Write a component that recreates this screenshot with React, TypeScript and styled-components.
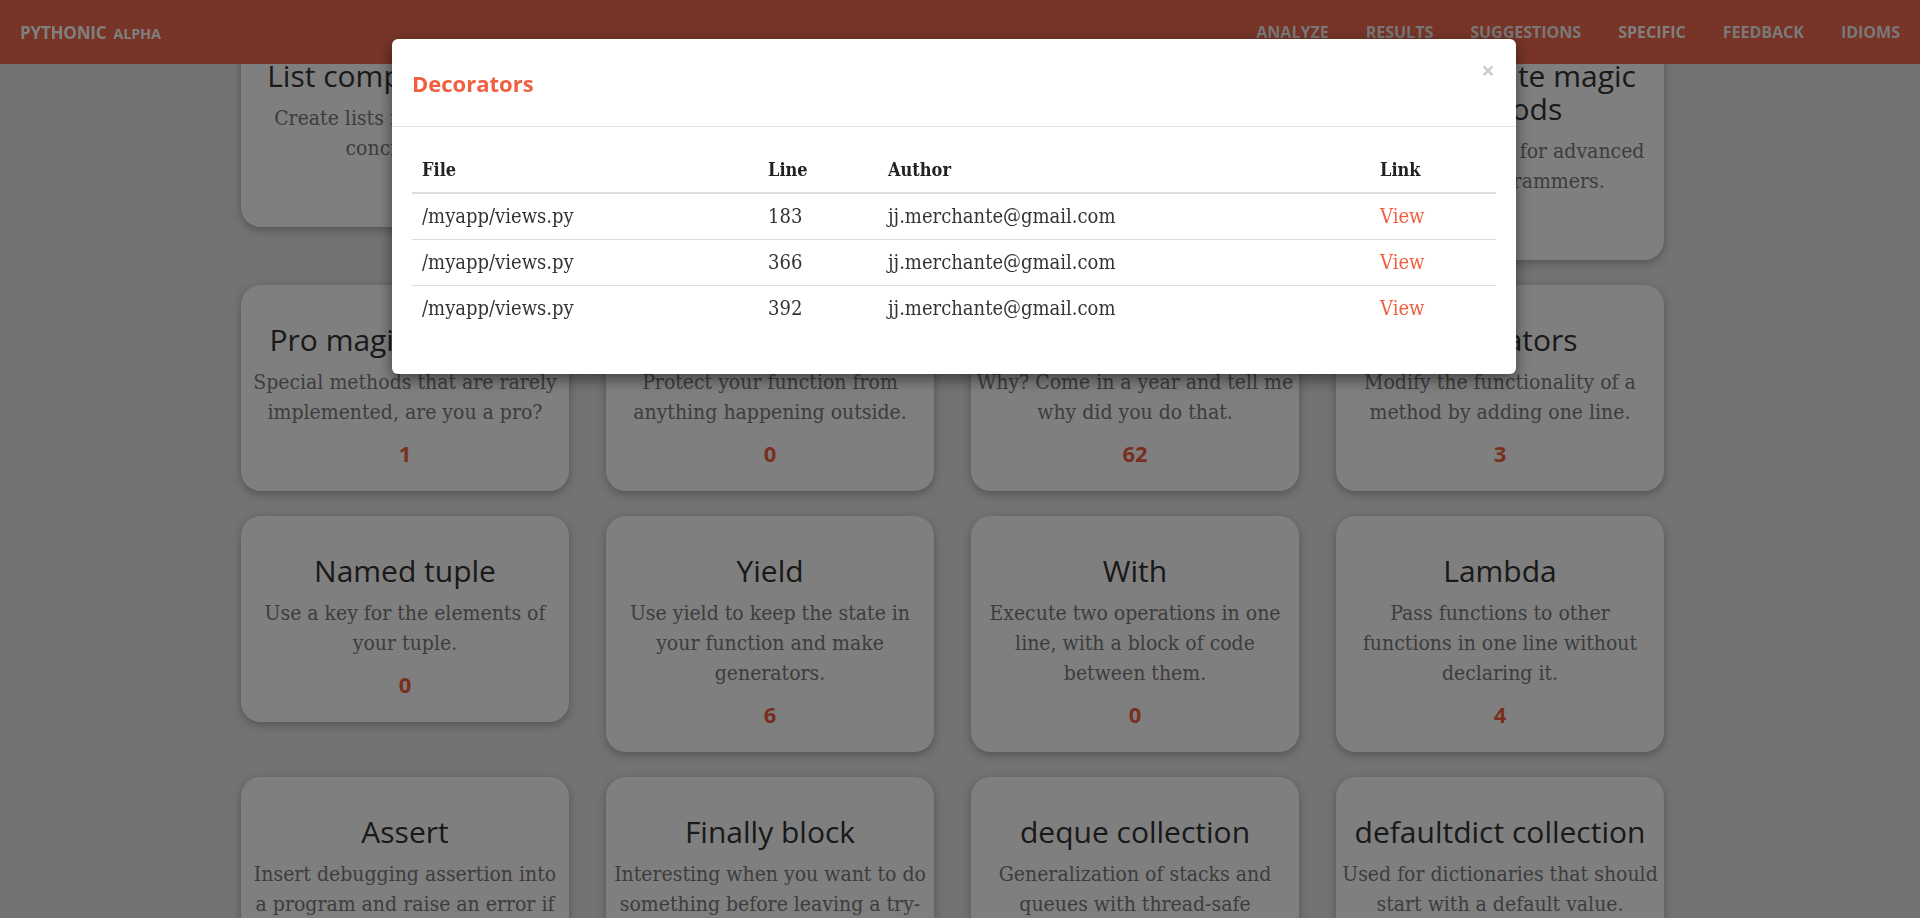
import React from "react";
import styled, { createGlobalStyle } from "styled-components";

const GlobalStyle = createGlobalStyle`
  html, body { margin: 0; padding: 0; }
  body {
    background: #e6e6e6;
    overflow: hidden;
    height: 918px;
    font-family: "DejaVu Serif Condensed", "DejaVu Serif", serif;
    font-stretch: condensed;
  }
  * { box-sizing: border-box; }
`;

const Navbar = styled.nav`
  position: fixed;
  top: 0;
  left: 0;
  right: 0;
  height: 64px;
  z-index: 10;
  background: rgba(240, 100, 70, 0.95);
  display: flex;
  align-items: center;
  justify-content: space-between;
  padding: 0 20px;
  font-family: "Open Sans", sans-serif;
  font-stretch: normal;
  text-transform: uppercase;
  font-weight: 700;
`;

const Brand = styled.a`
  color: #ffffff;
  font-size: 17px;
  letter-spacing: -0.2px;
  text-decoration: none;
  display: flex;
  align-items: baseline;
  gap: 7px;
`;

const BrandTag = styled.span`
  font-size: 14.5px;
`;

const NavList = styled.ul`
  list-style: none;
  margin: 0;
  padding: 0;
  display: flex;
  gap: 37px;
`;

const NavItem = styled.li<{ $active?: boolean }>`
  font-size: 16px;
  color: ${(p) => (p.$active ? "#ffffff" : "#f2f2f2")};
`;

const Main = styled.main`
  padding: 21px 0 40px 241px;
`;

const Grid = styled.div`
  display: grid;
  grid-template-columns: repeat(4, 328px);
  column-gap: 37px;
  row-gap: 25px;
  align-items: start;
`;

const Card = styled.section`
  background: #ffffff;
  border-radius: 20px;
  box-shadow: 0 3px 10px rgba(0, 0, 0, 0.28);
  padding: 18px 2px 26px;
  text-align: center;
`;

const CardTitle = styled.h2`
  margin: 20px 0 11px;
  font-family: "Open Sans", sans-serif;
  font-stretch: normal;
  font-weight: 400;
  font-size: 30px;
  line-height: 33px;
  color: #333333;
`;

const CardText = styled.p`
  margin: 0 0 14px;
  font-size: 21px;
  line-height: 30px;
  color: #7a7a7a;
`;

const CardCount = styled.div`
  font-family: "Open Sans", sans-serif;
  font-stretch: normal;
  font-weight: 700;
  font-size: 22px;
  line-height: 24px;
  color: #f05f40;
`;

const Backdrop = styled.div`
  position: fixed;
  inset: 0;
  z-index: 20;
  background: rgba(0, 0, 0, 0.5);
`;

const Modal = styled.div`
  position: fixed;
  top: 39px;
  left: 392px;
  width: 1124px;
  z-index: 30;
  background: #ffffff;
  border-radius: 6px;
  box-shadow: 0 5px 15px rgba(0, 0, 0, 0.5);
`;

const ModalHeader = styled.header`
  display: flex;
  justify-content: space-between;
  align-items: flex-start;
  padding: 22px 20px 21px;
  border-bottom: 1px solid #e5e5e5;
`;

const ModalTitle = styled.h4`
  margin: 0;
  font-family: "Open Sans", sans-serif;
  font-stretch: normal;
  font-weight: 700;
  font-size: 22px;
  line-height: 44px;
  color: #f05f40;
`;

const CloseButton = styled.button`
  border: 0;
  background: transparent;
  padding: 0;
  margin: -3px 1px 0 0;
  font-family: "Open Sans", sans-serif;
  font-weight: 700;
  font-size: 24px;
  line-height: 24px;
  color: #000000;
  opacity: 0.2;
  cursor: pointer;
`;

const ModalBody = styled.div`
  padding: 20px 20px 23px;
`;

const Table = styled.table`
  width: 100%;
  border-collapse: collapse;
  margin-bottom: 20px;
  table-layout: fixed;
`;

const Th = styled.th<{ $w?: number }>`
  width: ${(p) => (p.$w ? `${p.$w}px` : "auto")};
  text-align: left;
  padding: 8px 10px;
  font-size: 18px;
  line-height: 29px;
  font-weight: 700;
  color: #222222;
  border-bottom: 2px solid #dddddd;
`;

const Td = styled.td`
  padding: 8px 10px;
  font-size: 20px;
  line-height: 29px;
  color: #333333;
  border-top: 1px solid #dddddd;
`;

const Row = styled.tr`
  &:first-child td { border-top: 0; }
`;

const ViewLink = styled.a`
  color: #f05f40;
  text-decoration: none;
`;

type Idiom = { title: string; lines: string[]; count: number };

const idioms: Idiom[] = [
  { title: "List comprehension", lines: ["Create lists in a simple and", "concise way."], count: 9 },
  { title: "Dict comprehension", lines: ["Create dictionaries in a", "concise way."], count: 2 },
  { title: "Set comprehension", lines: ["Create sets in a simple and", "concise way."], count: 0 },
  { title: "Intermediate magic methods", lines: ["Special methods for advanced", "Python programmers."], count: 5 },
  { title: "Pro magic methods", lines: ["Special methods that are rarely", "implemented, are you a pro?"], count: 1 },
  { title: "Closures", lines: ["Protect your function from", "anything happening outside."], count: 0 },
  { title: "Global variables", lines: ["Why? Come in a year and tell me", "why did you do that."], count: 62 },
  { title: "Decorators", lines: ["Modify the functionality of a", "method by adding one line."], count: 3 },
  { title: "Named tuple", lines: ["Use a key for the elements of", "your tuple."], count: 0 },
  { title: "Yield", lines: ["Use yield to keep the state in", "your function and make", "generators."], count: 6 },
  { title: "With", lines: ["Execute two operations in one", "line, with a block of code", "between them."], count: 0 },
  { title: "Lambda", lines: ["Pass functions to other", "functions in one line without", "declaring it."], count: 4 },
  { title: "Assert", lines: ["Insert debugging assertion into", "a program and raise an error if", "something fails."], count: 0 },
  { title: "Finally block", lines: ["Interesting when you want to do", "something before leaving a try-", "except block."], count: 1 },
  { title: "deque collection", lines: ["Generalization of stacks and", "queues with thread-safe", "operations."], count: 0 },
  { title: "defaultdict collection", lines: ["Used for dictionaries that should", "start with a default value."], count: 2 },
];

const usages = [
  { file: "/myapp/views.py", line: 183, author: "jj.merchante@gmail.com" },
  { file: "/myapp/views.py", line: 366, author: "jj.merchante@gmail.com" },
  { file: "/myapp/views.py", line: 392, author: "jj.merchante@gmail.com" },
];

const navItems = ["Analyze", "Results", "Suggestions", "Specific", "Feedback", "Idioms"];

export default function App() {
  return (
    <>
      <GlobalStyle />
      <Navbar>
        <Brand href="#">
          Pythonic <BrandTag>alpha</BrandTag>
        </Brand>
        <NavList>
          {navItems.map((n) => (
            <NavItem key={n} $active={n === "Specific"}>
              {n}
            </NavItem>
          ))}
        </NavList>
      </Navbar>
      <Main>
        <Grid>
          {idioms.map((i) => (
            <Card key={i.title}>
              <CardTitle>{i.title}</CardTitle>
              <CardText>
                {i.lines.map((l, k) => (
                  <React.Fragment key={k}>
                    {k > 0 && <br />}
                    {l}
                  </React.Fragment>
                ))}
              </CardText>
              <CardCount>{i.count}</CardCount>
            </Card>
          ))}
        </Grid>
      </Main>
      <Backdrop />
      <Modal role="dialog">
        <ModalHeader>
          <ModalTitle>Decorators</ModalTitle>
          <CloseButton aria-label="Close">×</CloseButton>
        </ModalHeader>
        <ModalBody>
          <Table>
            <thead>
              <tr>
                <Th $w={346}>File</Th>
                <Th $w={120}>Line</Th>
                <Th $w={492}>Author</Th>
                <Th>Link</Th>
              </tr>
            </thead>
            <tbody>
              {usages.map((u) => (
                <Row key={u.line}>
                  <Td>{u.file}</Td>
                  <Td>{u.line}</Td>
                  <Td>{u.author}</Td>
                  <Td>
                    <ViewLink href="#">View</ViewLink>
                  </Td>
                </Row>
              ))}
            </tbody>
          </Table>
        </ModalBody>
      </Modal>
    </>
  );
}
